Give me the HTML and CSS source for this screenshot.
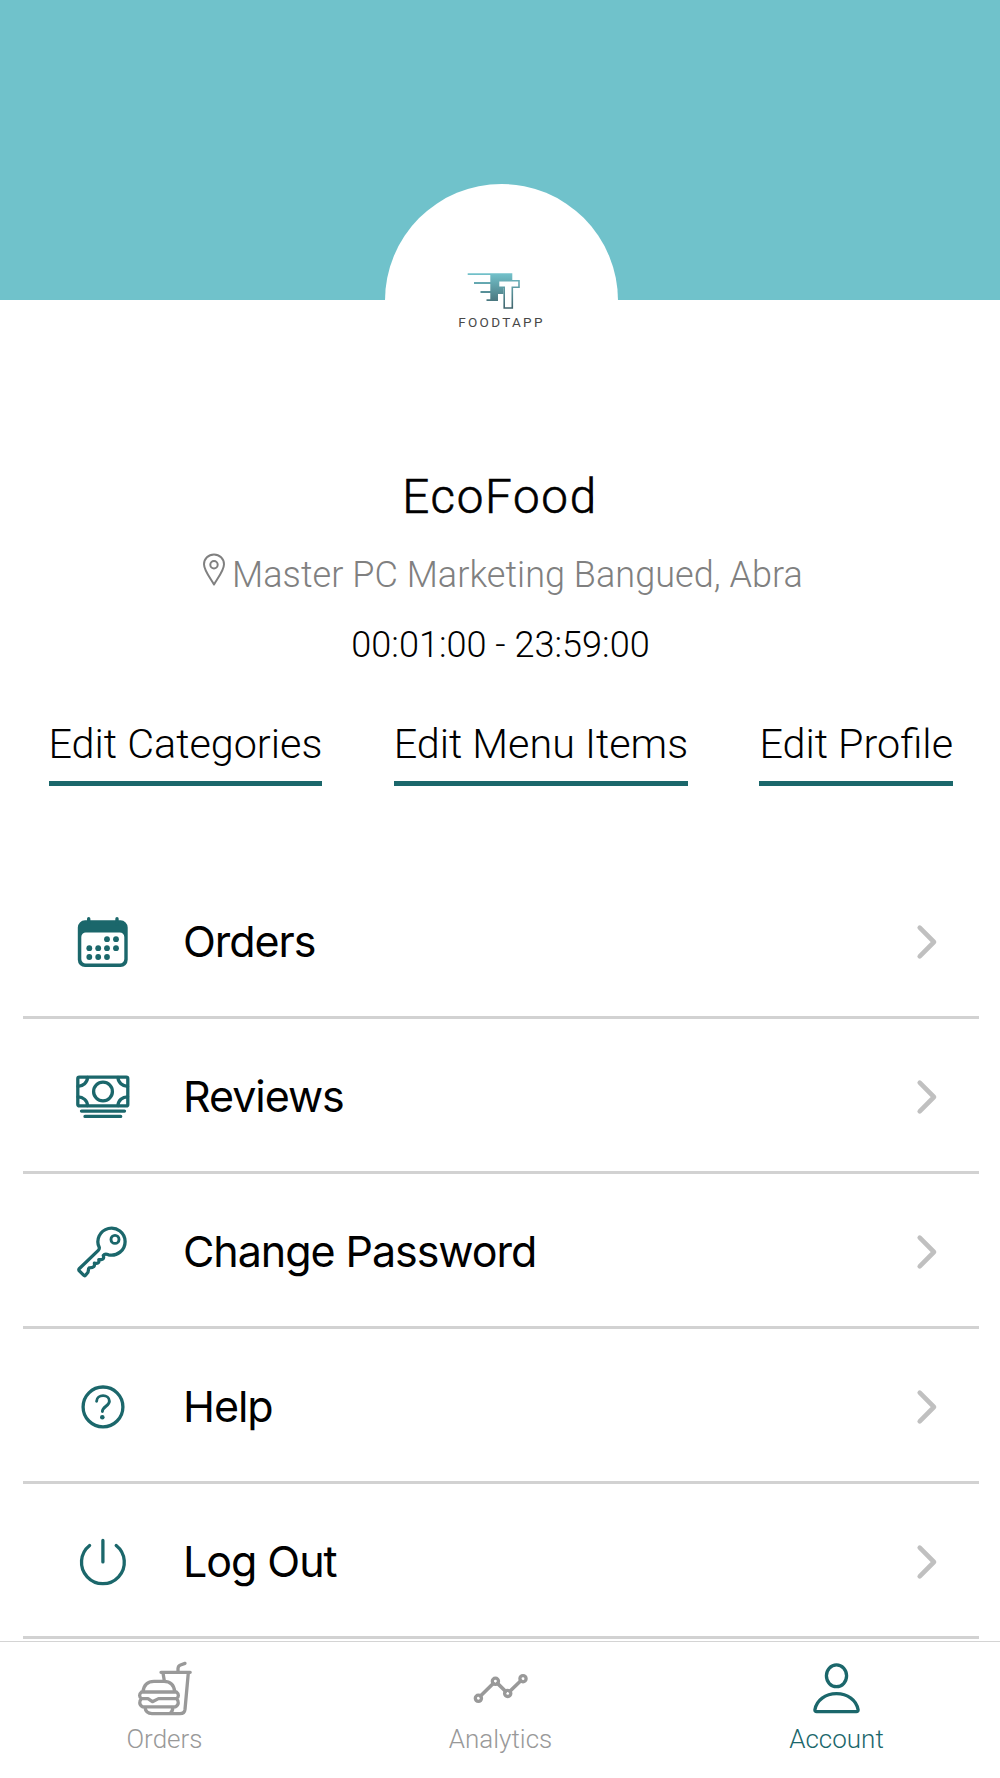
FILE: index.html
```html
<!DOCTYPE html>
<html lang="en">
<head>
<meta charset="utf-8">
<title>EcoFood</title>
<link rel="stylesheet" href="styles.css">
</head>
<body>
<div class="app">
  <header class="cover">
    <div class="avatar">
      <svg class="mark" width="64" height="48" viewBox="0 0 64 48">
        <defs>
          <linearGradient id="fade" gradientUnits="userSpaceOnUse" x1="0" y1="8" x2="0" y2="43">
            <stop offset="0" stop-color="#74c3cc"/><stop offset="1" stop-color="#3f646c"/>
          </linearGradient>
        </defs>
        <path fill="url(#fade)" d="M7.7 8.2H52.3V16H38V23H43.5V29H38V36H26.5V34.2H30.3V27.9H20.5V26.1H30.3V18.9H14V17.1H30.3V10H7.7Z"/>
        <path fill="#fff" stroke="url(#fade)" stroke-width="1.6" d="M38.5 15.8H59V22.3H52.3V43H44.2V22.3H38.5Z"/>
      </svg>
      <span class="brand">FOODTAPP</span>
    </div>
  </header>

  <section class="info">
    <h1 class="name">EcoFood</h1>
    <p class="address">
      <svg class="pin" width="26" height="36" viewBox="0 0 26 36" fill="none" stroke="#808080" stroke-width="2">
        <path d="M13 32.5C10 27 3 18.5 3 12.2A10 9.8 0 0 1 23 12.2C23 18.5 16 27 13 32.5Z" stroke-linejoin="round"/>
        <circle cx="13" cy="12.7" r="3.7"/>
      </svg>
      <span>Master PC Marketing Bangued, Abra</span>
    </p>
    <p class="hours">00:01:00 - 23:59:00</p>
  </section>

  <nav class="links">
    <a class="link">Edit Categories</a>
    <a class="link">Edit Menu Items</a>
    <a class="link">Edit Profile</a>
  </nav>

  <main class="menu">
    <div class="row">
      <svg class="icon" viewBox="0 0 60 60">
        <path fill="currentColor" fill-rule="evenodd" d="M12 8.3H47.5A7.2 7.2 0 0 1 54.7 15.5V47.8A7.2 7.2 0 0 1 47.5 55H12A7.2 7.2 0 0 1 4.8 47.8V15.5A7.2 7.2 0 0 1 12 8.3ZM12.8 20.5A4.5 4.5 0 0 0 8.3 25V47A4.5 4.5 0 0 0 12.8 51.5H46.8A4.5 4.5 0 0 0 51.3 47V25A4.5 4.5 0 0 0 46.8 20.5Z"/>
        <path d="M15.7 6.8V12M44 6.8V12" stroke-width="3.4"/>
        <g fill="currentColor" stroke="none"><circle cx="34" cy="27.2" r="2.9"/><circle cx="43" cy="27.2" r="2.9"/><circle cx="16.3" cy="36.2" r="2.9"/><circle cx="25.2" cy="36.2" r="2.9"/><circle cx="34" cy="36.2" r="2.9"/><circle cx="43" cy="36.2" r="2.9"/><circle cx="16.3" cy="45" r="2.9"/><circle cx="25.2" cy="45" r="2.9"/><circle cx="34" cy="45" r="2.9"/></g>
      </svg>
      <span class="label">Orders</span>
      <svg class="chevron" viewBox="0 0 24 40"><path d="M4.7 5.7 19 20 4.7 34.3"/></svg>
    </div>
    <div class="row">
      <svg class="icon" viewBox="0 0 60 60">
        <rect x="4.8" y="10.2" width="50" height="28.7" rx="1.5"/>
        <circle cx="30" cy="24.5" r="9.4"/>
        <path d="M14.5 10.5A9.5 9 0 0 1 5 19.3M45 10.5A9.5 9 0 0 0 54.6 19.3M14.5 38.6A9.5 9 0 0 0 5 29.8M45 38.6A9.5 9 0 0 1 54.6 29.8M8.5 44.1H51.5M12 49.4H47.7"/>
      </svg>
      <span class="label">Reviews</span>
      <svg class="chevron" viewBox="0 0 24 40"><path d="M4.7 5.7 19 20 4.7 34.3"/></svg>
    </div>
    <div class="row">
      <svg class="icon" viewBox="0 0 60 60">
        <path d="M26.3 25.6A13.6 13.5 0 1 1 35.5 32.8C33 31.8 31.5 31.8 30.3 33.5 31.5 37 29.5 38 25.8 37.7 26.5 41 24.5 42 21.4 41.2 22 44 21 45.8 16.3 45.8 14.4 47.5 16.5 49.5 14 51.5L12.5 53.3Q11.6 54.1 10.6 53.1L6.3 48.9Q5.4 47.8 6.2 46.7L25.3 28.4Q26.5 27.2 26.3 25.6Z"/>
        <circle cx="42" cy="17.4" r="4" stroke-width="2.9"/>
      </svg>
      <span class="label">Change Password</span>
      <svg class="chevron" viewBox="0 0 24 40"><path d="M4.7 5.7 19 20 4.7 34.3"/></svg>
    </div>
    <div class="row">
      <svg class="icon" viewBox="0 0 60 60">
        <circle cx="30" cy="29.9" r="19.9"/>
        <path d="M23.6 24.2C23.8 16.8 36.4 16.8 36.4 24.2 36.4 29 29.4 29.5 29.4 34.5" stroke-width="2.9"/>
        <circle cx="29.3" cy="40.2" r="2.3" fill="currentColor" stroke="none"/>
      </svg>
      <span class="label">Help</span>
      <svg class="chevron" viewBox="0 0 24 40"><path d="M4.7 5.7 19 20 4.7 34.3"/></svg>
    </div>
    <div class="row">
      <svg class="icon" viewBox="0 0 60 60">
        <path d="M16.6 13.5A21.4 21.4 0 1 0 43.2 13.5M29.9 8.5V29.9"/>
      </svg>
      <span class="label">Log Out</span>
      <svg class="chevron" viewBox="0 0 24 40"><path d="M4.7 5.7 19 20 4.7 34.3"/></svg>
    </div>
  </main>

  <footer class="tabs">
    <a class="tab">
      <svg class="tab-icon" viewBox="0 0 70 70">
        <path d="M31 17.3H60.2M48 17V13.5Q48.2 10.8 50.5 10L55 8.4M58.3 18 55 54.5Q54.5 58.6 50 58.6H22Q15.8 58.6 14.8 52M33 18 34.2 25M13 36.5C14 29 18 26.3 24 26.3H34C40 26.3 44 30 44.7 36.5M11.5 37H46.5C49 39 49 42 46.5 43.6H28.5L22.4 46.7 18 43.6H11.5C9 42 9 39 11.5 37M11.5 43.6C9 46 9 50 12.5 51.8H45.5C49 50 49 46 46.5 43.6M43 52Q42.5 57 40 58.6"/>
      </svg>
      <span>Orders</span>
    </a>
    <a class="tab">
      <svg class="tab-icon" viewBox="1 0 70 70">
        <path d="M15.5 41.1 28.2 28.4M32.5 28.4 40.5 36.2M44.9 36.2 55.8 25.8" stroke-width="3.6"/>
        <circle cx="13.4" cy="43.3" r="3.1"/><circle cx="30.4" cy="26.3" r="3.1"/><circle cx="42.7" cy="38.4" r="3.1"/><circle cx="58" cy="23.7" r="3.1"/>
      </svg>
      <span>Analytics</span>
    </a>
    <a class="tab active">
      <svg class="tab-icon" viewBox="1 0 70 70">
        <ellipse cx="35.5" cy="20.8" rx="10.1" ry="10.9"/>
        <path d="M15.6 56.6Q13.8 56.6 13.9 54.8C15.5 45 24.5 38.7 35.5 38.7S55.5 45 57.1 54.8Q57.2 56.6 55.4 56.6Z"/>
      </svg>
      <span>Account</span>
    </a>
  </footer>
</div>
</body>
</html>
```
FILE: styles.css
```css
* { box-sizing: border-box; }

body {
  margin: 0;
  background: #fff;
  color: #000;
  font-family: Roboto, "Liberation Sans", sans-serif;
  font-weight: 300;
}

.app {
  display: flex;
  flex-direction: column;
  width: 1000px;
  height: 1778px;
  overflow: hidden;
}

.cover {
  display: flex;
  justify-content: center;
  flex: none;
  height: 300px;
  padding: 184px 0 0 2px;
  background: #70c2cb;
}

.avatar {
  display: flex;
  flex-direction: column;
  align-items: center;
  width: 233px;
  height: 233px;
  padding-top: 81px;
  border-radius: 50%;
  background: #fff;
}

.mark { margin-right: 18px; }

.brand {
  margin-top: 1px;
  padding-left: 1px;
  color: #484848;
  font-size: 13.5px;
  font-weight: 400;
  line-height: 16px;
  letter-spacing: 2.3px;
}

.info {
  display: flex;
  flex-direction: column;
  align-items: center;
  flex: none;
  height: 400px;
  padding-top: 166px;
}

.name {
  margin: 0;
  font-size: 47.5px;
  font-weight: 300;
  line-height: 62px;
  letter-spacing: 1.7px;
  -webkit-text-stroke: 0.6px currentColor;
}

.address {
  display: flex;
  margin: 22px 0 0 4px;
  color: #808080;
  font-size: 36px;
  line-height: 50px;
  letter-spacing: 0.05px;
  white-space: nowrap;
}

.pin { margin: 2px 5px 0 0; }

.hours {
  margin: 20px 0 0 1px;
  font-size: 36.1px;
  line-height: 50px;
}

.links {
  display: flex;
  justify-content: space-between;
  flex: none;
  height: 164px;
  padding: 18px 47px 0 48.5px;
}

.link {
  height: 68px;
  border-bottom: 5px solid #1b676b;
  font-size: 41.3px;
  line-height: 52px;
  white-space: nowrap;
}

.menu {
  display: flex;
  flex-direction: column;
  flex: none;
  height: 777px;
  padding: 0 21px 0 23px;
}

.row {
  display: flex;
  align-items: center;
  flex: none;
  height: 155.1px;
  padding: 3px 40px 0 50px;
  border-bottom: 3px solid #d2d2d2;
}

.icon {
  flex: none;
  width: 60px;
  height: 60px;
  color: #1b676b;
  fill: none;
  stroke: currentColor;
  stroke-width: 3.3;
  stroke-linecap: round;
  stroke-linejoin: round;
}

.icon path[fill] { stroke: none; }

.label {
  flex: 1;
  padding-left: 50px;
  margin-top: -2px;
  font-family: Inter, "Liberation Sans", sans-serif;
  font-size: 43px;
  font-weight: 400;
  line-height: 54px;
  letter-spacing: -1.05px;
}

.chevron {
  width: 24px;
  height: 40px;
  fill: none;
  stroke: #c0c0c0;
  stroke-width: 4.6;
  stroke-linecap: round;
  stroke-linejoin: round;
}

.tabs {
  display: grid;
  grid-template-columns: repeat(3, 336px);
  justify-content: center;
  flex: none;
  height: 137px;
  border-top: 1px solid #d4d4d4;
  background: #fff;
}

.tab {
  display: flex;
  flex-direction: column;
  align-items: center;
  padding: 13px 0 0 1px;
  color: #999;
  font-size: 26px;
  line-height: 28px;
}

.tab.active { color: #1b676b; }

.tab-icon {
  width: 70px;
  height: 70px;
  fill: none;
  stroke: currentColor;
  stroke-width: 3.3;
  stroke-linecap: round;
  stroke-linejoin: round;
}
```
